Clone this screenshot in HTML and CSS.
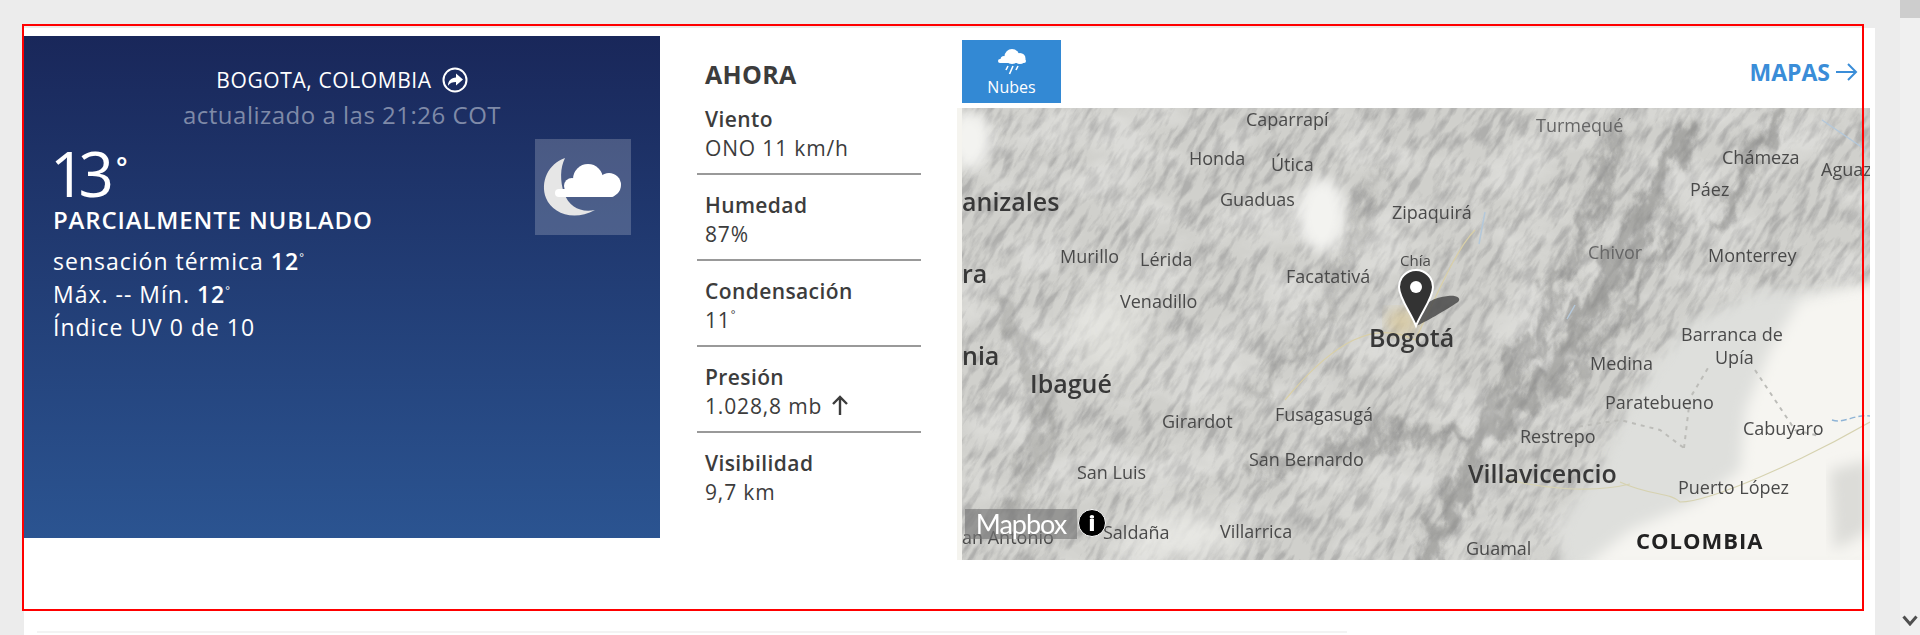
FILE: index.html
```html
<!DOCTYPE html>
<html lang="es">
<head>
    <meta charset="UTF-8">
    <title>Tiempo en Bogota</title>
    <link rel="stylesheet" href="styles.css">
</head>
<body>
    <div class="card">
        <div class="now">
            <div class="current">
                <div class="loc">
                    <span>BOGOTA, COLOMBIA</span>
                    <svg class="loc-icon" width="26" height="26" viewBox="0 0 26 26">
                        <circle cx="13" cy="13" r="11.5" fill="none" stroke="#fff" stroke-width="2"/>
                        <path d="M14 6.5l7 6-7 6v-3.6c-3.600 0-6 1-8 3.800 0-4.800 3-7.800 8-8.200z" fill="#fff"/>
                    </svg>
                </div>
                <div class="updated">actualizado a las 21:26 COT</div>
                <div class="cur-main">
                    <div class="cur-text">
                        <div class="temp">13<span class="temp-deg">°</span></div>
                        <div class="cond">PARCIALMENTE NUBLADO</div>
                        <div class="line">sensación térmica <b>12</b><sup>°</sup></div>
                        <div class="line">Máx. -- Mín. <b>12</b><sup>°</sup></div>
                        <div class="line">Índice UV 0 de 10</div>
                    </div>
                    <div class="cond-icon">
                        <svg width="96" height="96" viewBox="0 0 96 96">
                            <path d="M30 19C13 25 5 43 11 59c6 15 27 24 49 12-14 3-26-3-31-17-4-12-4-25 1-35z" fill="#e6e6e6"/>
                            <g fill="#fff">
                                <circle cx="53" cy="40" r="15"/>
                                <circle cx="74" cy="46" r="12"/>
                                <circle cx="37" cy="47" r="8"/>
                                <rect x="20" y="50" width="60" height="8" rx="4"/>
                            </g>
                        </svg>
                    </div>
                </div>
            </div>

            <div class="details">
                <h2>AHORA</h2>
                <div class="row"><b>Viento</b><span>ONO 11 km/h</span></div>
                <div class="row"><b>Humedad</b><span>87%</span></div>
                <div class="row"><b>Condensación</b><span>11<sup>°</sup></span></div>
                <div class="row"><b>Presión</b>
                    <span>1.028,8 mb
                        <svg class="up" width="18" height="21" viewBox="0 0 18 21"><path d="M9 20V2M2 9l7-7 7 7" fill="none" stroke="#3c3c3c" stroke-width="2.400"/></svg>
                    </span>
                </div>
                <div class="row"><b>Visibilidad</b><span>9,7 km</span></div>
            </div>

            <div class="maps">
                <div class="map-top">
                    <div class="tab">
                        <svg width="28" height="26" viewBox="0 0 28 26">
                            <g fill="#fff">
                                <circle cx="14" cy="7.500" r="7.500"/>
                                <circle cx="22" cy="9.500" r="5.500"/>
                                <circle cx="6" cy="10.500" r="3.500"/>
                                <rect x="0" y="10" width="28" height="4" rx="2"/>
                            </g>
                            <path d="M10 17l-2 4M15 17l-3.500 8M20 17l-2 4" fill="none" stroke="#fff" stroke-width="1.600"/>
                        </svg>
                        <span>Nubes</span>
                    </div>
                    <a class="more">MAPAS
                        <svg width="22" height="18" viewBox="0 0 22 18"><path d="M0 9h20M12 1l8 8-8 8" fill="none" stroke="#3a8dd8" stroke-width="2"/></svg>
                    </a>
                </div>
                <div class="map">
                    <svg class="map-svg" width="913" height="452" viewBox="957 108 913 452">
                        <defs>
                            <filter id="relief" x="0" y="0" width="100%" height="100%">
                                <feTurbulence type="fractalNoise" baseFrequency="0.04 0.13" numOctaves="6" seed="11"/>
                                <feColorMatrix type="matrix" values="0 0 0 0 0.3  0 0 0 0 0.3  0 0 0 0 0.3  3 0 0 0 -1.250"/>
                            </filter>
                            <filter id="patches" x="0" y="0" width="100%" height="100%">
                                <feTurbulence type="fractalNoise" baseFrequency="0.012 0.02" numOctaves="4" seed="4"/>
                                <feColorMatrix type="matrix" values="0 0 0 0 0.95  0 0 0 0 0.95  0 0 0 0 0.93  0 3.500 0 0 -1.500"/>
                            </filter>
                            <filter id="rough" x="-10%" y="-10%" width="120%" height="120%">
                                <feGaussianBlur in="SourceGraphic" stdDeviation="4" result="b"/>
                                <feTurbulence type="fractalNoise" baseFrequency="0.05 0.03" numOctaves="4" seed="3" result="n"/>
                                <feDisplacementMap in="b" in2="n" scale="46" xChannelSelector="R" yChannelSelector="G"/>
                            </filter>
                            <filter id="soft"><feGaussianBlur stdDeviation="7"/></filter>
                            <filter id="softer"><feGaussianBlur stdDeviation="16"/></filter>
                            <filter id="tiny"><feGaussianBlur stdDeviation="0.300"/></filter>
                            <clipPath id="map-clip"><rect x="962" y="108" width="908" height="452"/></clipPath>
                        </defs>

                        <rect x="957" y="108" width="913" height="452" fill="#f5f4ef"/>

                        <g clip-path="url(#map-clip)">
                            <rect x="962" y="108" width="908" height="452" fill="#d0d0cc"/>

                            <!-- relief, turned to run along the cordillera -->
                            <g opacity="0.55" transform="rotate(-58 1400 330)">
                                <rect x="800" y="-300" width="1300" height="1300" filter="url(#relief)"/>
                            </g>
                            <rect x="962" y="108" width="908" height="452" filter="url(#patches)" opacity="0.28"/>

                            <!-- darker ridges -->
                            <g fill="none" stroke="#7d7d7b" stroke-linecap="round" filter="url(#rough)" opacity="0.5">
                                <path d="M1420 570L1480 450 1560 360 1630 240 1690 120" stroke-width="22"/>
                                <path d="M1470 440L1540 330 1590 220 1620 120" stroke-width="12"/>
                                <path d="M1550 400L1620 320 1680 220" stroke-width="10"/>
                                <path d="M1260 470L1400 430 1470 440" stroke-width="12"/>
                                <path d="M1250 400L1330 300 1380 170" stroke-width="10" opacity="0.6"/>
                                <path d="M1000 300L1050 420 1010 520" stroke-width="18" opacity="0.6"/>
                                <path d="M1780 110L1720 220" stroke-width="14"/>
                            </g>

                            <!-- plains -->
                            <path d="M1556 570L1566 510 1600 470 1630 400 1690 320 1760 290 1880 290V570z" fill="#dedfdc" filter="url(#soft)"/>
                            <path d="M1580 570L1630 530 1700 500 1740 470 1745 410 1770 350 1800 300 1880 280V570z" fill="#f6f5f1" filter="url(#soft)"/>
                            <path d="M1830 470l40-10v70l-36 20z" fill="#dcdcd8" filter="url(#soft)"/>

                            <!-- clouds and valleys -->
                            <g fill="#f3f3f0" filter="url(#soft)">
                                <ellipse cx="1322" cy="215" rx="24" ry="38"/>
                                <ellipse cx="970" cy="140" rx="22" ry="30"/>
                            </g>
                            <g fill="#ecece8" filter="url(#softer)">
                                <ellipse cx="1180" cy="535" rx="60" ry="22"/>
                                <ellipse cx="1110" cy="330" rx="40" ry="50" opacity="0.6"/>
                            </g>

                            <!-- roads, rivers, borders -->
                            <g fill="none" stroke-width="1.200">
                                <path d="M1620 482c30 14 50 10 60 20 30 0 120-40 190-80M1500 478c40 10 90 16 130 6" stroke="#d6d2b0"/>
                                <path d="M1415 340c-40-20-80 0-130 60M1415 340c20-40 40-90 60-110" stroke="#d9cfa6"/>
                                <path d="M1485 212l-6 32M1575 305l-8 14M1822 120l44 30" stroke="#b4c8da" stroke-width="1.500"/>
                                <path d="M1832 420c12 4 22-6 38-4" stroke="#8fb4d6" stroke-dasharray="6 3" stroke-width="1.500"/>
                                <path d="M1570 428l50-8 40 10 24 18M1684 448l6-50 18-30M1755 370l20 30 20 30 24 6" stroke="#bcbcb8" stroke-dasharray="4 5" stroke-width="2"/>
                            </g>
                            <ellipse cx="1402" cy="322" rx="16" ry="14" fill="#d9c48c" opacity="0.6" filter="url(#soft)"/>

                            <!-- place names -->
                            <g class="places" filter="url(#tiny)">
                                <text x="1246" y="126">Caparrapí</text>
                                <text x="1536" y="132" class="faint">Turmequé</text>
                                <text x="1722" y="164">Chámeza</text>
                                <text x="1821" y="176">Aguaz</text>
                                <text x="1690" y="196">Páez</text>
                                <text x="1189" y="165">Honda</text>
                                <text x="1271" y="171">Útica</text>
                                <text x="1220" y="206">Guaduas</text>
                                <text x="962" y="211" class="big">anizales</text>
                                <text x="1392" y="219">Zipaquirá</text>
                                <text x="1400" y="266" class="small">Chía</text>
                                <text x="1588" y="259" class="faint">Chivor</text>
                                <text x="1708" y="262">Monterrey</text>
                                <text x="1060" y="263">Murillo</text>
                                <text x="1140" y="266">Lérida</text>
                                <text x="1120" y="308">Venadillo</text>
                                <text x="1286" y="283">Facatativá</text>
                                <text x="962" y="283" class="big faint">ra</text>
                                <text x="1369" y="347" class="big">Bogotá</text>
                                <text x="1681" y="341">Barranca de</text>
                                <text x="1715" y="364">Upía</text>
                                <text x="1590" y="370">Medina</text>
                                <text x="962" y="365" class="big">nia</text>
                                <text x="1030" y="393" class="big">Ibagué</text>
                                <text x="1605" y="409">Paratebueno</text>
                                <text x="1162" y="428">Girardot</text>
                                <text x="1275" y="421">Fusagasugá</text>
                                <text x="1743" y="435">Cabuyaro</text>
                                <text x="1520" y="443">Restrepo</text>
                                <text x="1249" y="466">San Bernardo</text>
                                <text x="1077" y="479">San Luis</text>
                                <text x="1468" y="483" class="big">Villavicencio</text>
                                <text x="1678" y="494">Puerto López</text>
                                <text x="1103" y="539">Saldaña</text>
                                <text x="1220" y="538">Villarrica</text>
                                <text x="962" y="544">an Antonio</text>
                                <text x="1466" y="555">Guamal</text>
                                <text x="1636" y="549" class="country">COLOMBIA</text>
                            </g>
                        </g>

                        <!-- pin -->
                        <path d="M1416 326c8-3 30-16 42-24 4-4-2-7-10-6-14 1-24 8-28 14z" fill="#4a4a4a" opacity="0.85"/>
                        <path d="M1416 326c-5-13-17-28-17-39a17 17 0 0 1 34 0c0 11-12 26-17 39z" fill="#333" stroke="#fff" stroke-width="2"/>
                        <circle cx="1416" cy="287" r="6" fill="#fff"/>
                    </svg>
                    <div class="logo">Mapbox</div>
                    <div class="info">i</div>
                </div>
            </div>
        </div>
        <div class="next-card"></div>
    </div>

    <div class="outline"></div>
    <div class="scrollbar">
        <div class="thumb"></div>
        <svg width="16" height="11" viewBox="0 0 16 11"><path d="M1.500 1.500L8 9l6.500-7.500" fill="none" stroke="#505050" stroke-width="3"/></svg>
    </div>
</body>
</html>
```

FILE: styles.css
```css
html, body { margin: 0; height: 635px; overflow: hidden; }
body { background: #ececec; font-family: "Open Sans", sans-serif; color: #3c3c3c; position: relative; }

.card { margin: 28px 45px 0 24px; background: #fff; height: 607px; padding-top: 8px; box-sizing: border-box; }
.now { display: flex; height: 592px; }

.current { width: 636px; height: 502px; box-sizing: border-box; padding-top: 29px; color: #fff; background: linear-gradient(#19275a, #2b5491); }
.loc { display: flex; justify-content: center; align-items: center; gap: 10px; font-size: 21px; letter-spacing: .6px; line-height: 30px; }
.updated { text-align: center; font-size: 24px; letter-spacing: .5px; line-height: 34px; color: #7f8aa8; margin-top: 3px; }
.cur-main { display: flex; justify-content: space-between; padding: 0 29px; margin-top: 7px; }
.temp { font-size: 62px; line-height: 56px; letter-spacing: -7px; margin: 0 0 5px -3px; }
.temp-deg { font-size: 27px; font-weight: 600; vertical-align: 20px; letter-spacing: 0; margin-left: 9px; }
.cond { font-size: 24px; font-weight: 600; letter-spacing: .85px; line-height: 28px; margin-bottom: 11px; }
.line { font-size: 23px; letter-spacing: 1px; line-height: 33px; }
.line b { font-weight: 600; }
.line sup { font-size: 11px; vertical-align: 9px; line-height: 0; }
.cond-icon { width: 96px; height: 96px; background: rgba(255,255,255,.2); }
.cond-icon svg { display: block; }

.details { width: 224px; margin: 0 36px 0 37px; }
.details h2 { margin: 0; height: 53px; box-sizing: border-box; font-size: 25px; font-weight: 700; letter-spacing: .3px; line-height: 32px; padding: 22px 8px 0; }
.row { height: 86px; box-sizing: border-box; padding: 16px 8px 0; border-bottom: 2px solid #999; font-size: 21px; letter-spacing: .4px; line-height: 29px; }
.row:last-child { border-bottom: 0; }
.row b { display: block; font-weight: 600; }
.row span { display: block; letter-spacing: .85px; }
.row sup { font-size: 11px; vertical-align: 10px; line-height: 0; }
.up { vertical-align: -2px; margin-left: 2px; }

.maps { width: 913px; }
.map-top { display: flex; justify-content: space-between; align-items: center; height: 63px; margin: 4px 12px 5px 5px; }
.tab { width: 99px; height: 63px; box-sizing: border-box; padding-top: 9px; background: #3389d4; color: #fff; text-align: center; font-size: 16px; line-height: 20px; }
.tab svg, .tab span { display: block; margin: 0 auto; }
.tab span { margin-top: 2px; }
.more { color: #3a8dd8; font-size: 23px; font-weight: 700; display: flex; align-items: center; gap: 6px; }

.map { position: relative; width: 913px; height: 452px; overflow: hidden; }
.map-svg { display: block; }
.places text { font-family: "Open Sans", sans-serif; font-size: 18px; fill: #4a4a4a; }
.places .small { font-size: 15px; }
.places .faint { fill: #666; }
.places .big { font-size: 25px; font-weight: 600; fill: #383838; }
.places .country { font-size: 22px; font-weight: 700; letter-spacing: 1px; fill: #222; }

.logo { position: absolute; left: 8px; top: 401px; width: 112px; height: 30px; background: rgba(120,120,120,.65); color: #fff; font-family: Lato, sans-serif; font-size: 27px; letter-spacing: -1px; line-height: 29px; text-align: center; }
.info { position: absolute; left: 121px; top: 401px; width: 26px; height: 26px; border: 1px solid #fff; border-radius: 50%; background: #000; color: #fff; font-family: "Open Sans", sans-serif; font-weight: 800; font-size: 21px; line-height: 26px; text-align: center; }

.next-card { margin: 3px 528px 0 13px; height: 10px; background: #fff; border-top: 2px solid #f3f3f3; }

.outline { position: absolute; left: 22px; top: 24px; width: 1838px; height: 583px; border: 2px solid #f00; }
.scrollbar { position: absolute; right: 0; top: 0; width: 20px; height: 635px; background: #f0f0f0; }
.thumb { height: 18px; background: #cdcdcd; }
.scrollbar svg { position: absolute; left: 2px; top: 615px; }
```
